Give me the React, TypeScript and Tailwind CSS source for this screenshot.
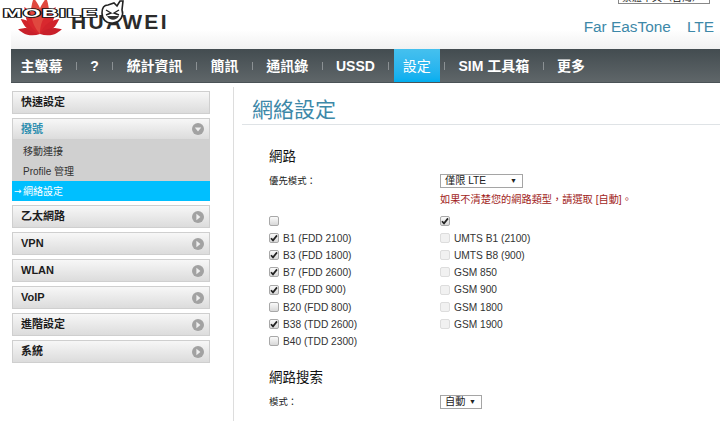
import React from "react";

const font = "font-['Liberation_Sans','Noto_Sans_CJK_TC',sans-serif]";

function Petals() {
  const petals: [number, number, string][] = [
    [-78, 0.66, "#c8202a"], [-52, 0.72, "#d1232b"], [-30, 0.92, "#d8282e"], [-10, 1.08, "#e0483f"],
    [10, 1.08, "#e0483f"], [30, 0.92, "#d8282e"], [52, 0.72, "#d1232b"], [78, 0.66, "#c8202a"],
  ];
  return (
    <svg width="50" height="37" viewBox="0 0 50 37" className="block">
      {petals.map(([a, s, c]) => (
        <path
          key={a}
          d="M0 0 C-5 -8 -6.5 -18 -3.5 -26 C-2.5 -29 -1 -32 0 -34 C1 -32 2.5 -29 3.5 -26 C6.5 -18 5 -8 0 0 Z"
          fill={c}
          transform={`translate(25 35) rotate(${a}) scale(${s})`}
        />
      ))}
    </svg>
  );
}

function Watermark() {
  return (
    <div className="absolute left-[3px] top-0 flex items-center h-[26px]">
      <span className="block w-[97px] font-bold text-[11px] leading-none tracking-[0.6px] text-white [-webkit-text-stroke:1.6px_#111] [paint-order:stroke_fill] scale-x-[2.05] origin-left whitespace-nowrap">MOBILE</span>
      <svg width="26" height="26" viewBox="0 0 26 26" className="-ml-[1px]">
        <path d="M3 13 C3 7 6 5 9 5 L15 3 L18 6 L21 1 L24 1 L23 10 C25 15 22 22 14 23 C7 24 3 19 3 13 Z" fill="#fff" stroke="#222" strokeWidth="1.6" />
        <path d="M7 10 L12 13 L7 15 M20 10 L15 13 L20 15" fill="none" stroke="#222" strokeWidth="1.4" />
        <path d="M8 16 C11 21 17 21 20 16 Z" fill="#333" />
      </svg>
    </div>
  );
}

function Header() {
  return (
    <div className="relative h-[49px] ml-[11px] bg-gradient-to-b from-white from-60% to-[#f1f1f1] flex justify-between">
      <div className="flex items-start">
        <div className="ml-[4px] -mt-[1px]"><Petals /></div>
        <span className="ml-[6px] mt-[10px] text-[21px] leading-[24px] font-bold text-[#2b2b2b] tracking-[2.3px]">HUAWEI</span>
      </div>
      <div className="flex pt-[18px] pr-[6px] gap-[16px] text-[15.4px] leading-[18px] text-[#3d88a8]">
        <span>Far EasTone</span>
        <span>LTE</span>
      </div>
      <div className="absolute right-[10px] top-[-8px] w-[92px] h-[12px] border border-[#888] bg-white text-[10px] leading-[10px] text-[#222] whitespace-nowrap pl-[3px] flex justify-between pr-[2px]">
        <span>繁體中文（台灣）</span>
        <span className="text-[7px]">▼</span>
      </div>
    </div>
  );
}

function Nav() {
  const items = ["主螢幕", "?", "統計資訊", "簡訊", "通訊錄", "USSD", "設定", "SIM 工具箱", "更多"];
  return (
    <div className="ml-[11px] pl-[0.5px] h-[34px] bg-gradient-to-b from-[#434c50] to-[#5f6669] flex items-stretch border-b border-[#4a5256]">
      {items.map((t, i) => (
        <React.Fragment key={t}>
          <div className={`flex items-center pt-[2px] px-[9px] text-[14px] text-white whitespace-nowrap ${t === "設定" ? "font-normal bg-gradient-to-b from-[#45c0ee] to-[#00aeef]" : "font-bold"}`}>{t}</div>
          {i < items.length - 1 && (
            <div className="flex items-center mx-[4.4px]"><div className="w-px h-[8px] bg-[#8b9194]" /></div>
          )}
        </React.Fragment>
      ))}
    </div>
  );
}

function Circle({ open }: { open?: boolean }) {
  return (
    <svg width="12" height="12" viewBox="0 0 12 12" className="shrink-0">
      <circle cx="6" cy="6" r="6" fill="#a2a2a2" />
      {open ? <path d="M2.8 4.6 H9.2 L6 8.4 Z" fill="#eee" /> : <path d="M4.4 2.8 V9.2 L8.4 6 Z" fill="#eee" />}
    </svg>
  );
}

function SideItem({ label, arrow = true, open, h = 23 }: { label: string; arrow?: boolean; open?: boolean; h?: number }) {
  return (
    <div
      className={`flex items-center justify-between pl-[8px] pr-[5px] border border-[#cfcfcf] bg-gradient-to-b from-[#f7f7f7] to-[#dcdcdc] text-[11px] font-bold ${open ? "text-[#2f8fb0]" : "text-[#1c1c1c]"}`}
      style={{ height: h }}
    >
      <span>{label}</span>
      {arrow && <Circle open={open} />}
    </div>
  );
}

function Sidebar() {
  return (
    <div className="ml-[12px] w-[198px] shrink-0 pt-[8px] flex flex-col">
      <SideItem label="快速設定" arrow={false} />
      <div className="mt-[4px]">
        <SideItem label="撥號" open h={22} />
        <div className="bg-[#d0d0d0] text-[10px] text-[#333]">
          <div className="h-[21px] pl-[11px] pt-[2px] flex items-center">移動連接</div>
          <div className="h-[20px] pl-[11px] pt-[1px] flex items-center">Profile 管理</div>
          <div className="h-[20px] bg-[#00bfff] text-white flex items-center pl-[2px]">
            <span className="w-[9px] font-['DejaVu_Sans',sans-serif] text-[9px] leading-none">→</span>
            <span>網絡設定</span>
          </div>
        </div>
      </div>
      <div className="mt-[4px] flex flex-col gap-[4px]">
        <SideItem label="乙太網路" />
        <SideItem label="VPN" />
        <SideItem label="WLAN" />
        <SideItem label="VoIP" />
        <SideItem label="進階設定" />
        <SideItem label="系統" />
      </div>
    </div>
  );
}

function Check({ on, off }: { on?: boolean; off?: boolean }) {
  return (
    <div className={`w-[10px] h-[10px] rounded-[2px] border flex items-center justify-center shrink-0 ${off ? "border-[#dddddd] bg-[#f1f1f1]" : "border-[#a8a8a8] bg-gradient-to-b from-[#fafafa] to-[#d8d8d8]"}`}>
      {on && (
        <svg width="8" height="8" viewBox="0 0 8 8"><path d="M1 4.2 L3 6.4 L7 1.4" fill="none" stroke="#222" strokeWidth="1.7" /></svg>
      )}
    </div>
  );
}

function Opt({ on, off, label }: { on?: boolean; off?: boolean; label?: string }) {
  return (
    <div className="flex items-center gap-[4px] h-[17.25px]">
      <Check on={on} off={off} />
      {label && <span className="pt-[1px] text-[10.2px] text-[#333] whitespace-nowrap">{label}</span>}
    </div>
  );
}

function Select({ label, w }: { label: string; w: number }) {
  return (
    <div className="h-[14px] border border-[#a5a5a5] flex items-center justify-between pl-[4px] pr-[5px] text-[10.2px] text-[#222] bg-white" style={{ width: w }}>
      <span>{label}</span>
      <span className="text-[7px]">▼</span>
    </div>
  );
}

function Main() {
  const left: [string, boolean][] = [
    ["B1 (FDD 2100)", true], ["B3 (FDD 1800)", true], ["B7 (FDD 2600)", true], ["B8 (FDD 900)", true],
    ["B20 (FDD 800)", false], ["B38 (TDD 2600)", true], ["B40 (TDD 2300)", false],
  ];
  const right = ["UMTS B1 (2100)", "UMTS B8 (900)", "GSM 850", "GSM 900", "GSM 1800", "GSM 1900"];
  return (
    <div className="ml-[23px] mt-[4px] flex-1 border-l border-[#dddddd] pl-[8px]">
      <div className="h-[38px] pl-[10px] pt-[10px] border-b border-[#dfe3e6] text-[21px] leading-[26px] text-[#3d88a8]">網絡設定</div>
      <div className="pl-[27px]">
        <div className="mt-[22px] text-[13.5px] leading-[20px] text-[#111]">網路</div>
        <div className="mt-[7px] grid grid-cols-[171px_1fr]">
          <div className="text-[9.4px] leading-[14px] text-[#222]">優先模式：</div>
          <div>
            <Select label="僅限 LTE" w={83} />
            <div className="mt-[4px] text-[10.2px] leading-[16px] text-[#a11d22] whitespace-nowrap">如果不清楚您的網路類型，請選取 [自動]。</div>
          </div>
        </div>
        <div className="mt-[4px] grid grid-cols-[171px_1fr]">
          <div>
            <Opt />
            {left.map(([l, c]) => <Opt key={l} label={l} on={c} />)}
          </div>
          <div>
            <Opt on />
            {right.map((l) => <Opt key={l} label={l} off />)}
          </div>
        </div>
        <div className="mt-[18px] text-[13.5px] leading-[20px] text-[#111]">網路搜索</div>
        <div className="mt-[7px] grid grid-cols-[171px_1fr]">
          <div className="text-[9.4px] leading-[14px] text-[#222]">模式：</div>
          <Select label="自動" w={42} />
        </div>
      </div>
    </div>
  );
}

export default function App() {
  return (
    <div className={`relative w-[720px] h-[421px] overflow-hidden bg-white ${font}`}>
      <Header />
      <Nav />
      <div className="flex h-[338px]">
        <Sidebar />
        <Main />
      </div>
      <Watermark />
    </div>
  );
}
